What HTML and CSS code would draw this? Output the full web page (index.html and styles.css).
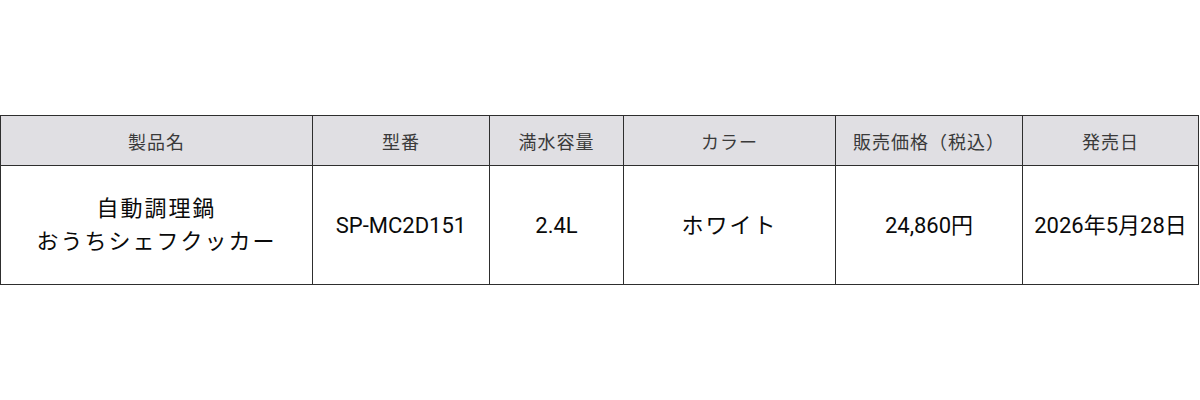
FILE: index.html
```html
<!DOCTYPE html>
<html lang="ja">
<head>
<meta charset="utf-8">
<link rel="stylesheet" href="styles.css">
</head>
<body>
<div class="page">
  <table class="spec">
    <colgroup>
      <col class="c1"><col class="c2"><col class="c3"><col class="c4"><col class="c5"><col class="c6">
    </colgroup>
    <thead>
      <tr>
        <th>製品名</th>
        <th>型番</th>
        <th>満水容量</th>
        <th>カラー</th>
        <th>販売価格（税込）</th>
        <th>発売日</th>
      </tr>
    </thead>
    <tbody>
      <tr>
        <td class="jp">自動調理鍋<br>おうちシェフクッカー</td>
        <td>SP-MC2D151</td>
        <td>2.4L</td>
        <td class="jp">ホワイト</td>
        <td>24,860円</td>
        <td>2026年5月28日</td>
      </tr>
    </tbody>
  </table>
</div>
</body>
</html>
```

FILE: styles.css
```css
html, body {
  margin: 0;
  padding: 0;
  background: #ffffff;
}
.page {
  height: 400px;
  display: flex;
  align-items: center;
  justify-content: flex-start;
}
.spec {
  border-collapse: collapse;
  table-layout: fixed;
  width: 1198px;
  font-family: Roboto, "Noto Sans CJK JP", sans-serif;
}
.c1 { width: 312px; }
.c2 { width: 177px; }
.c3 { width: 134px; }
.c4 { width: 212px; }
.c5 { width: 187px; }
.c6 { width: 176px; }
.spec th, .spec td {
  border: 1.5px solid #2e2e2e;
  text-align: center;
  padding: 0;
}
.spec th {
  height: 49px;
  background: #e0dfe3;
  color: #3a3a3a;
  font-weight: 400;
  font-size: 18px;
  letter-spacing: 1px;
}
.spec td {
  height: 118px;
  color: #0a0a0a;
  font-size: 22px;
  line-height: 33px;
}
.jp {
  letter-spacing: 2px;
}
```
